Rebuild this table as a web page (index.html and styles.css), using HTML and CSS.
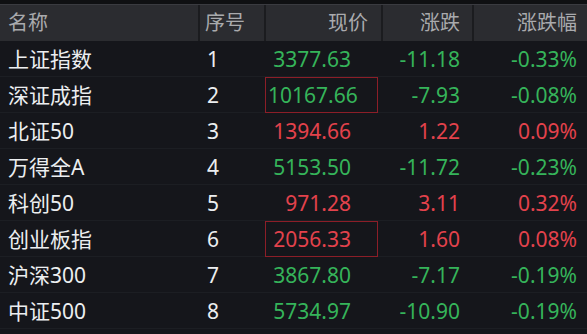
FILE: index.html
```html
<!DOCTYPE html>
<html lang="zh">
<head>
<meta charset="utf-8">
<link rel="stylesheet" href="styles.css">
</head>
<body>
<div class="topbar"></div>
<div class="table">
  <div class="row head">
    <div class="c name">名称</div>
    <div class="c idx">序号</div>
    <div class="c price">现价</div>
    <div class="c chg">涨跌</div>
    <div class="c pct">涨跌幅</div>
  </div>
  <div class="row">
    <div class="c name">上证指数</div><div class="c idx">1</div>
    <div class="c price down">3377.63</div><div class="c chg down">-11.18</div><div class="c pct down">-0.33%</div>
  </div>
  <div class="row">
    <div class="c name">深证成指</div><div class="c idx">2</div>
    <div class="c price down"><span class="box"></span>10167.66</div><div class="c chg down">-7.93</div><div class="c pct down">-0.08%</div>
  </div>
  <div class="row">
    <div class="c name">北证50</div><div class="c idx">3</div>
    <div class="c price up">1394.66</div><div class="c chg up">1.22</div><div class="c pct up">0.09%</div>
  </div>
  <div class="row">
    <div class="c name">万得全A</div><div class="c idx">4</div>
    <div class="c price down">5153.50</div><div class="c chg down">-11.72</div><div class="c pct down">-0.23%</div>
  </div>
  <div class="row">
    <div class="c name">科创50</div><div class="c idx">5</div>
    <div class="c price up">971.28</div><div class="c chg up">3.11</div><div class="c pct up">0.32%</div>
  </div>
  <div class="row">
    <div class="c name">创业板指</div><div class="c idx">6</div>
    <div class="c price up"><span class="box"></span>2056.33</div><div class="c chg up">1.60</div><div class="c pct up">0.08%</div>
  </div>
  <div class="row">
    <div class="c name">沪深300</div><div class="c idx">7</div>
    <div class="c price down">3867.80</div><div class="c chg down">-7.17</div><div class="c pct down">-0.19%</div>
  </div>
  <div class="row">
    <div class="c name">中证500</div><div class="c idx">8</div>
    <div class="c price down">5734.97</div><div class="c chg down">-10.90</div><div class="c pct down">-0.19%</div>
  </div>
</div>
</body>
</html>
```
FILE: styles.css
```css
html, body {
  margin: 0;
  padding: 0;
  background: #15161b;
  width: 587px;
  height: 334px;
  overflow: hidden;
  font-family: "Noto Sans", "Noto Sans CJK SC", sans-serif;
}
.topbar {
  height: 4px;
  background: #0f1012;
}
.table {
  display: flex;
  flex-direction: column;
}
.row {
  display: grid;
  grid-template-columns: 198px 66px 117px 91px 115px;
  height: 36px;
  border-bottom: 1px solid #1c1e23;
  box-sizing: border-box;
  color: #eceef0;
  font-size: 21px;
}
.row.head {
  height: 37px;
  background: #2b2c30;
  border-top: 1px solid #3a3b40;
  border-bottom: none;
  color: #a9aaad;
  font-size: 20px;
}
.c {
  line-height: 36px;
  white-space: nowrap;
  position: relative;
  box-sizing: border-box;
}
.head .c + .c {
  border-left: 2px solid #1b1c1f;
}
.name { padding-left: 8px; }
.idx { padding-left: 9px; }
.head .idx { padding-left: 5px; }
.price { text-align: right; padding-right: 30px; padding-left: 4px; }
.head .price { padding-right: 13px; }
.chg { text-align: right; padding-right: 12px; }
.pct { text-align: right; padding-right: 10px; }
.box {
  position: absolute;
  left: 1px;
  right: 3px;
  top: 0;
  bottom: 0;
  border: 1px solid #8c1e28;
}
.up { color: #e3424c; }
.down { color: #35b45a; }
```
